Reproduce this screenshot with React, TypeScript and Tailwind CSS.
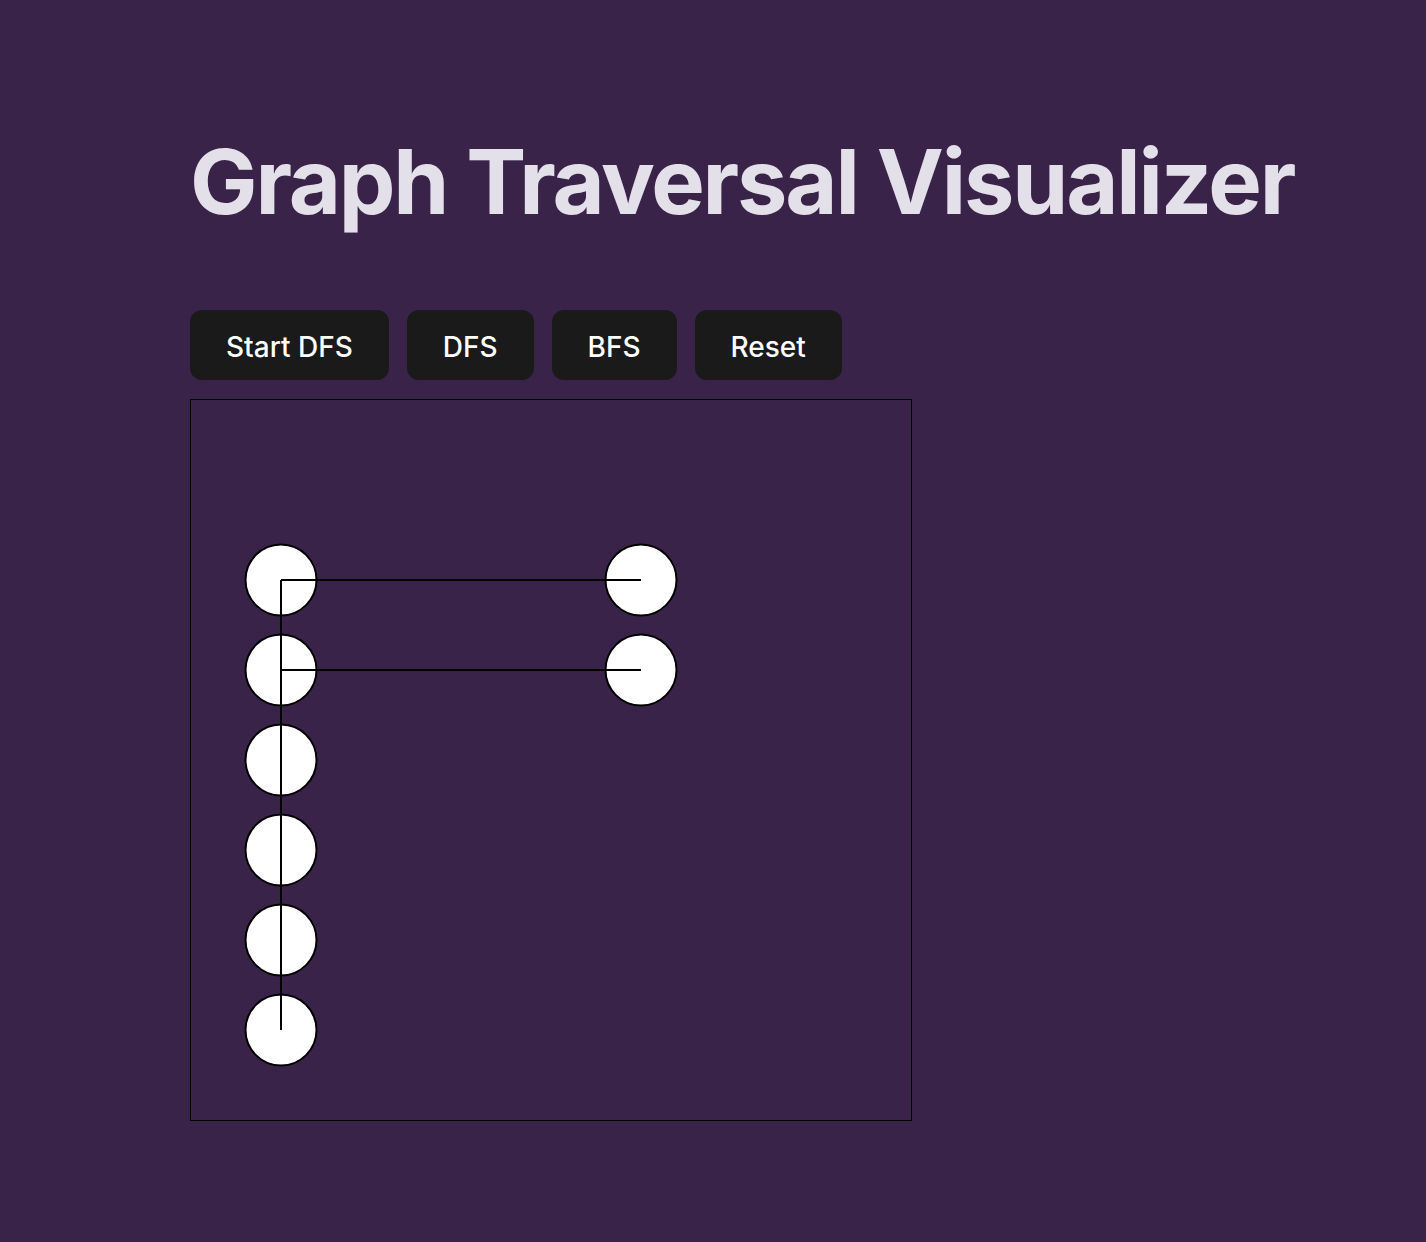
const nodes = [
  { x: 90, y: 180 },
  { x: 90, y: 270 },
  { x: 90, y: 360 },
  { x: 90, y: 450 },
  { x: 90, y: 540 },
  { x: 90, y: 630 },
  { x: 450, y: 180 },
  { x: 450, y: 270 },
];

const edges = [
  [0, 1],
  [1, 2],
  [2, 3],
  [3, 4],
  [4, 5],
  [0, 6],
  [1, 7],
];

const buttons = ["Start DFS", "DFS", "BFS", "Reset"];

export default function App() {
  return (
    <div className="min-h-screen bg-[#392349] pl-[190px] pt-[137px] font-['Inter',sans-serif]">
      <h1 className="text-[90px] leading-none font-bold text-[#e4e0e9] tracking-[-0.024em]">
        Graph Traversal Visualizer
      </h1>
      <div className="mt-[83px] flex gap-[18px]">
        {buttons.map((b) => (
          <button
            key={b}
            className="h-[70px] px-[36px] pt-[3px] rounded-[12px] bg-[#1a1a1a] text-white text-[28px] font-medium hover:cursor-pointer"
          >
            {b}
          </button>
        ))}
      </div>
      <div className="mt-[19px] w-[722px] h-[722px] border border-black">
        <svg width="720" height="720" className="block">
          {nodes.map((n, i) => (
            <circle key={i} cx={n.x} cy={n.y} r={35.5} fill="white" stroke="black" strokeWidth={2} />
          ))}
          {edges.map(([a, b], i) => (
            <line
              key={i}
              x1={nodes[a].x}
              y1={nodes[a].y}
              x2={nodes[b].x}
              y2={nodes[b].y}
              stroke="black"
              strokeWidth={2}
            />
          ))}
        </svg>
      </div>
    </div>
  );
}
